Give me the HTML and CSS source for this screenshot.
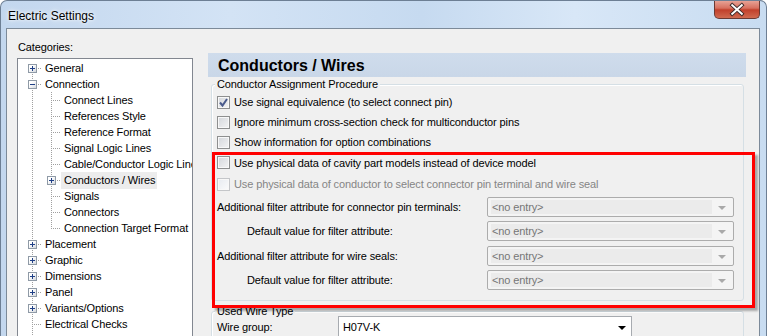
FILE: index.html
```html
<!DOCTYPE html>
<html lang="en">
<head>
<meta charset="UTF-8">
<title>Electric Settings</title>
<link rel="stylesheet" href="styles.css">
</head>
<body>
<div class="window">
  <div class="titlebar">
    <span class="title">Electric Settings</span>
    <div class="close">
      <svg width="46" height="19" viewBox="0 0 46 19">
        <path d="M18 5 L28 14 M28 5 L18 14" stroke="#3b2a2a" stroke-width="4" stroke-linecap="square"/>
        <path d="M18 5 L28 14 M28 5 L18 14" stroke="#ffffff" stroke-width="2" stroke-linecap="square"/>
      </svg>
    </div>
  </div>

  <div class="client">
    <!-- Categories tree -->
    <div class="cats">
      <div class="cats-label">Categories:</div>
      <div class="tree">
        <div class="row"><span class="c first"><i class="pm"></i></span><span class="txt">General</span></div>
        <div class="row"><span class="c tee"><i class="pm minus"></i></span><span class="txt">Connection</span></div>
        <div class="row"><span class="c pipe"></span><span class="c tee"></span><span class="txt">Connect Lines</span></div>
        <div class="row"><span class="c pipe"></span><span class="c tee"></span><span class="txt">References Style</span></div>
        <div class="row"><span class="c pipe"></span><span class="c tee"></span><span class="txt">Reference Format</span></div>
        <div class="row"><span class="c pipe"></span><span class="c tee"></span><span class="txt">Signal Logic Lines</span></div>
        <div class="row"><span class="c pipe"></span><span class="c tee"></span><span class="txt">Cable/Conductor Logic Lines</span></div>
        <div class="row"><span class="c pipe"></span><span class="c tee"><i class="pm"></i></span><span class="txt sel">Conductors / Wires</span></div>
        <div class="row"><span class="c pipe"></span><span class="c tee"></span><span class="txt">Signals</span></div>
        <div class="row"><span class="c pipe"></span><span class="c tee"></span><span class="txt">Connectors</span></div>
        <div class="row"><span class="c pipe"></span><span class="c elbow"></span><span class="txt">Connection Target Format</span></div>
        <div class="row"><span class="c tee"><i class="pm"></i></span><span class="txt">Placement</span></div>
        <div class="row"><span class="c tee"><i class="pm"></i></span><span class="txt">Graphic</span></div>
        <div class="row"><span class="c tee"><i class="pm"></i></span><span class="txt">Dimensions</span></div>
        <div class="row"><span class="c tee"><i class="pm"></i></span><span class="txt">Panel</span></div>
        <div class="row"><span class="c tee"><i class="pm"></i></span><span class="txt">Variants/Options</span></div>
        <div class="row"><span class="c tee"></span><span class="txt">Electrical Checks</span></div>
        <div class="row"><span class="c tee"></span><span class="txt">Area Templates</span></div>
      </div>
    </div>

    <!-- Settings page -->
    <div class="page">
      <div class="page-head">Conductors / Wires</div>

      <div class="group g1">
        <div class="gtitle">Conductor Assignment Procedure</div>
        <div class="chk"><span class="cb"><svg width="11" height="11" viewBox="0 0 11 11"><path d="M2 5.5 L4.5 8.5 L9 2" fill="none" stroke="#4a5b8c" stroke-width="2"/></svg></span>Use signal equivalence (to select connect pin)</div>
        <div class="chk"><span class="cb"></span>Ignore minimum cross-section check for multiconductor pins</div>
        <div class="chk"><span class="cb"></span>Show information for option combinations</div>
        <div class="chk r4"><span class="cb"></span>Use physical data of cavity part models instead of device model</div>
        <div class="chk r5 off"><span class="cb"></span>Use physical data of conductor to select connector pin terminal and wire seal</div>

        <div class="frow first">
          <span class="flabel">Additional filter attribute for connector pin terminals:</span>
          <div class="combo off"><span class="field">&lt;no entry&gt;</span><span class="arr"></span></div>
        </div>
        <div class="frow">
          <span class="flabel sub">Default value for filter attribute:</span>
          <div class="combo off"><span class="field">&lt;no entry&gt;</span><span class="arr"></span></div>
        </div>
        <div class="frow wide">
          <span class="flabel">Additional filter attribute for wire seals:</span>
          <div class="combo off"><span class="field">&lt;no entry&gt;</span><span class="arr"></span></div>
        </div>
        <div class="frow">
          <span class="flabel sub">Default value for filter attribute:</span>
          <div class="combo off"><span class="field">&lt;no entry&gt;</span><span class="arr"></span></div>
        </div>
      </div>

      <div class="group g2">
        <div class="gtitle">Used Wire Type</div>
        <div class="frow wire">
          <span class="flabel short">Wire group:</span>
          <div class="combo on"><span class="field">H07V-K</span><span class="arr"></span></div>
        </div>
      </div>
    </div>
  </div>

  <!-- annotation frame -->
  <div class="highlight"></div>
</div>
</body>
</html>
```

FILE: styles.css
```css
html, body {
    margin: 0;
    padding: 0;
}
body {
    width: 767px;
    height: 336px;
    overflow: hidden;
    font-family: "Liberation Sans", Arial, sans-serif;
    font-size: 11px;
    letter-spacing: -0.12px;
    color: #000;
    background: #fff;
}
.window {
    position: relative;
    width: 767px;
    height: 336px;
    box-sizing: border-box;
    display: flex;
    flex-direction: column;
    overflow: hidden;
    background: linear-gradient(to right, #c3d7ee 0%, #d3e3f5 30%, #c6daf0 55%, #d8e7f7 75%, #c8dcf1 100%);
    border: 1px solid #6d7f94;
    border-bottom: none;
    border-radius: 7px 7px 0 0;
}
.titlebar {
    height: 27px;
    display: flex;
    align-items: flex-start;
    flex-shrink: 0;
}
.title {
    font-size: 12px;
    line-height: 14px;
    letter-spacing: 0;
    margin: 8px 0 0 7px;
    color: #000;
    text-shadow: 0 0 6px #fff, 0 0 3px #fff;
}
.close {
    margin-left: auto;
    margin-right: 6px;
    margin-top: -1px;
    width: 46px;
    height: 19px;
    border: 1px solid #6b3a34;
    border-top: none;
    border-radius: 0 0 5px 5px;
    background: linear-gradient(#e9a99d 0%, #d7705f 45%, #c1402c 55%, #d06a50 100%);
    box-sizing: border-box;
    display: flex;
    align-items: center;
    justify-content: center;
}
.close svg {
    display: block;
}

/* client area */
.client {
    flex: 1;
    margin: 0 6px 0 5px;
    border: 1px solid #7c8a99;
    border-bottom: none;
    background: #f0f0f0;
    display: flex;
    overflow: hidden;
}
.cats {
    margin-left: 10px;
    width: 176px;
    flex-shrink: 0;
}
.cats-label {
    padding: 12px 0 0 1px;
    line-height: 13px;
}
.tree {
    margin-top: 4px;
    height: 300px;
    border: 1px solid #828790;
    background: #fff;
    padding: 1px 0 0 5px;
    overflow: hidden;
    white-space: nowrap;
}
.row {
    display: flex;
    height: 16px;
    line-height: 16px;
}
.c {
    width: 19px;
    flex-shrink: 0;
    box-sizing: border-box;
    padding: 4px 0 0 5px;
    background-repeat: no-repeat;
}
.c.pipe {
    background-image: repeating-linear-gradient(to bottom, #a0a0a0 0 1px, transparent 1px 2px);
    background-size: 1px 16px;
    background-position: 9px 0;
}
.c.tee {
    background-image:
        repeating-linear-gradient(to bottom, #a0a0a0 0 1px, transparent 1px 2px),
        repeating-linear-gradient(to right, #a0a0a0 0 1px, transparent 1px 2px);
    background-size: 1px 16px, 10px 1px;
    background-position: 9px 0, 9px 8px;
}
.c.elbow {
    background-image:
        repeating-linear-gradient(to bottom, #a0a0a0 0 1px, transparent 1px 2px),
        repeating-linear-gradient(to right, #a0a0a0 0 1px, transparent 1px 2px);
    background-size: 1px 9px, 10px 1px;
    background-position: 9px 0, 9px 8px;
}
.c.first {
    background-image:
        repeating-linear-gradient(to bottom, #a0a0a0 0 1px, transparent 1px 2px),
        repeating-linear-gradient(to right, #a0a0a0 0 1px, transparent 1px 2px);
    background-size: 1px 8px, 10px 1px;
    background-position: 9px 8px, 9px 8px;
}
.pm {
    display: block;
    width: 7px;
    height: 7px;
    border: 1px solid #8f9aa6;
    background:
        linear-gradient(#1f3f86, #1f3f86) center / 5px 1px no-repeat,
        linear-gradient(#1f3f86, #1f3f86) center / 1px 5px no-repeat,
        linear-gradient(135deg, #ffffff 30%, #d4d8de);
}
.pm.minus {
    background:
        linear-gradient(#1f3f86, #1f3f86) center / 5px 1px no-repeat,
        linear-gradient(135deg, #ffffff 30%, #d4d8de);
}
.txt {
    padding: 0 2px 0 3px;
    line-height: 16px;
}
.txt.sel {
    background: #ececec;
    height: 17px;
}

/* right page */
.page {
    margin-left: 15px;
    margin-top: 24px;
    width: 538px;
    flex-shrink: 0;
}
.page-head {
    height: 24px;
    line-height: 25px;
    background: linear-gradient(#cfdcec, #c9d7e8);
    font-size: 16px;
    letter-spacing: 0;
    font-weight: bold;
    padding-left: 10px;
}
.group {
    margin: 7px 2px 0 3px;
    border: 1px solid #d5dfe5;
    border-radius: 3px;
    box-shadow: inset 1px 1px 0 #fff;
    padding: 0 9px 10px 5px;
}
.gtitle {
    width: fit-content;
    height: 13px;
    line-height: 13px;
    margin: -7px 0 1px -2px;
    padding: 0 2px;
    background: #f0f0f0;
}
.chk {
    display: flex;
    align-items: center;
    height: 20px;
    white-space: nowrap;
}
.chk.r4 {
    height: 21px;
}
.chk.r5 {
    margin-top: 1px;
}
.cb {
    width: 11px;
    height: 11px;
    flex-shrink: 0;
    margin-right: 4px;
    border: 1px solid #8e8f8f;
    background: linear-gradient(135deg, #d3d6db 0%, #f4f4f4 100%);
    box-shadow: inset 0 0 0 1px #f8f8f8;
}
.cb svg {
    display: block;
}
.chk.off {
    color: #858585;
}
.chk.off .cb {
    border-color: #c4c6c9;
    background: linear-gradient(135deg, #e7ebf0, #fbfbfb);
}
.frow {
    display: flex;
    align-items: center;
    height: 20px;
    margin-top: 4px;
}
.frow.wide {
    margin-top: 5px;
}
.frow.first {
    margin-top: 3px;
}
.flabel {
    width: 270px;
    flex-shrink: 0;
    white-space: nowrap;
}
.flabel.sub {
    box-sizing: border-box;
    padding-left: 30px;
}
.combo {
    flex: 1;
    height: 20px;
    box-sizing: border-box;
    border: 1px solid #acacac;
    border-radius: 2px;
    display: flex;
    align-items: center;
    padding: 0 3px;
}
.combo.off {
    background: #f4f4f4;
    color: #767676;
}
.combo.off .field {
    background: #ebebeb;
    height: 14px;
    line-height: 14px;
    flex: 1;
    padding-left: 1px;
    margin-right: 6px;
}
.arr {
    width: 0;
    height: 0;
    border-left: 4px solid transparent;
    border-right: 4px solid transparent;
    border-top: 4px solid #a9a9a9;
    margin: 1px 4px 0 0;
}
.g2 {
    margin-top: 10px;
    padding-bottom: 20px;
}
.g2 .gtitle {
    margin-bottom: -3px;
}
.frow.wire {
    height: 22px;
    margin-top: 1px;
}
.flabel.short {
    width: 121px;
}
.combo.on {
    flex: none;
    width: 294px;
    height: 22px;
    background: #fff;
    border-color: #a7abb0;
    border-radius: 0;
}
.combo.on .field {
    flex: 1;
    padding-left: 1px;
}
.combo.on .arr {
    border-top-color: #000;
    margin-right: 2px;
}

/* red annotation frame */
.highlight {
    position: absolute;
    left: 211px;
    top: 151px;
    width: 543px;
    height: 156px;
    box-sizing: border-box;
    border: 3px solid #ff0000;
    box-shadow: 3px 3px 2px rgba(0, 0, 0, 0.3);
    pointer-events: none;
}
```
